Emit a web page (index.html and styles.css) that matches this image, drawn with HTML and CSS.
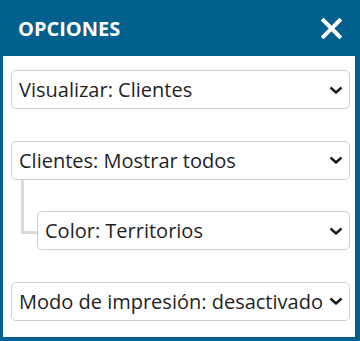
FILE: index.html
```html
<!DOCTYPE html>
<html lang="es">
<head>
    <meta charset="UTF-8">
    <meta name="viewport" content="width=device-width, initial-scale=1.0">
    <link rel="stylesheet" href="styles.css">
    <title>Opciones</title>
</head>
<body>
    <div class="panel">
        <div class="panel-header">
            <h1 class="panel-title">OPCIONES</h1>
            <button class="close" aria-label="Cerrar">
                <svg width="21" height="21" viewBox="0 0 21 21">
                    <path d="M2.5 2.5 L18.5 18.5 M18.5 2.5 L2.5 18.5" stroke="#fff" stroke-width="4" stroke-linecap="square" fill="none"/>
                </svg>
            </button>
        </div>
        <div class="panel-body">
            <div class="select">
                <span>Visualizar: Clientes</span>
                <svg class="chevron" width="14" height="8" viewBox="0 0 14 8"><path d="M1.5 1.5 L7 6.5 L12.5 1.5" stroke="#1a1a1a" stroke-width="2.4" fill="none"/></svg>
            </div>
            <div class="group">
                <div class="select">
                    <span>Clientes: Mostrar todos</span>
                    <svg class="chevron" width="14" height="8" viewBox="0 0 14 8"><path d="M1.5 1.5 L7 6.5 L12.5 1.5" stroke="#1a1a1a" stroke-width="2.4" fill="none"/></svg>
                </div>
                <div class="child">
                    <div class="branch"></div>
                    <div class="select">
                        <span>Color: Territorios</span>
                        <svg class="chevron" width="14" height="8" viewBox="0 0 14 8"><path d="M1.5 1.5 L7 6.5 L12.5 1.5" stroke="#1a1a1a" stroke-width="2.4" fill="none"/></svg>
                    </div>
                </div>
            </div>
            <div class="select">
                <span>Modo de impresión: desactivado</span>
                <svg class="chevron" width="14" height="8" viewBox="0 0 14 8"><path d="M1.5 1.5 L7 6.5 L12.5 1.5" stroke="#1a1a1a" stroke-width="2.4" fill="none"/></svg>
            </div>
        </div>
    </div>
</body>
</html>
```

FILE: styles.css
```css
body {
    margin: 0;
    background: #02608f;
    font-family: "Open Sans", "Noto Sans", sans-serif;
}

.panel {
    width: 360px;
    height: 341px;
    display: flex;
    flex-direction: column;
}

.panel-header {
    height: 56px;
    display: flex;
    align-items: center;
    justify-content: space-between;
    padding: 0 18px;
    box-sizing: border-box;
}

.panel-title {
    margin: 0;
    color: #fff;
    font-size: 20px;
    font-weight: 700;
}

.close {
    background: none;
    border: 0;
    padding: 0;
    width: 21px;
    height: 21px;
    cursor: pointer;
}

.close svg {
    display: block;
}

.panel-body {
    flex: 1;
    background: #fff;
    margin: 0 5px 4px 3px;
    padding: 14px 5px 0 8px;
    display: flex;
    flex-direction: column;
    gap: 31.5px;
}

.select {
    height: 39px;
    box-sizing: border-box;
    border: 1px solid #cfcfcf;
    border-radius: 5px;
    display: flex;
    align-items: center;
    justify-content: space-between;
    padding: 0 6px 0 7px;
    font-size: 20px;
    color: #1f1f1f;
    white-space: nowrap;
}

.chevron {
    flex: none;
}

.group {
    display: flex;
    flex-direction: column;
}

.child {
    display: flex;
    padding-top: 31.5px;
}

.child .select {
    flex: 1;
}

.branch {
    width: 16px;
    margin-left: 10px;
    margin-top: -31.5px;
    height: 54px;
    box-sizing: border-box;
    border-left: 3px solid #dadada;
    border-bottom: 3px solid #dadada;
    flex: none;
}
```
